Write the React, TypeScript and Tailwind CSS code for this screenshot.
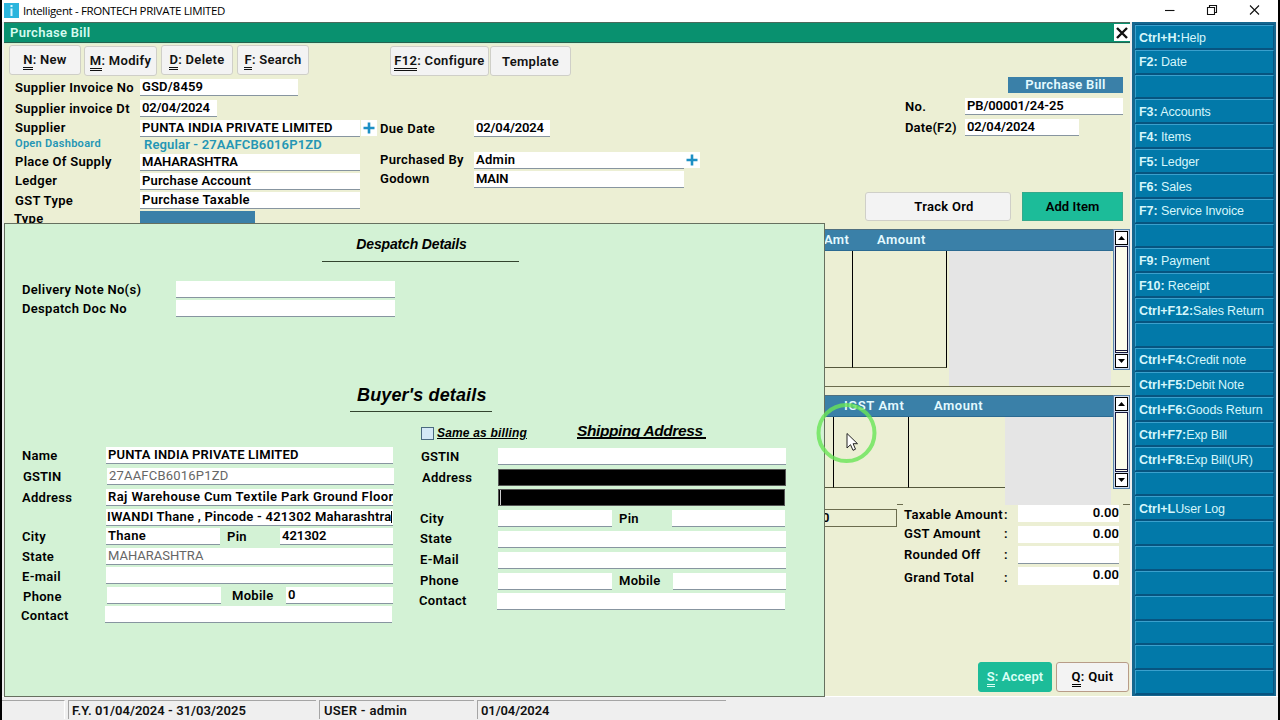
import type { ReactNode } from "react";

function Field({ className = "", children }: { className?: string; children?: ReactNode }) {
  return (
    <div className={`flex h-[17px] shrink-0 items-center overflow-hidden border-b border-[#8795a0] bg-white pb-px pl-[2px] leading-[15px] whitespace-pre ${className}`}>
      {children}
    </div>
  );
}

function Row({ label, labelClass, className, children }: { label: string; labelClass: string; className: string; children?: ReactNode }) {
  return (
    <div className={`flex h-[17px] ${className}`}>
      <div className={`shrink-0 leading-[16px] whitespace-pre ${labelClass}`}>{label}</div>
      {children}
    </div>
  );
}

function Plus({ className = "" }: { className?: string }) {
  return (
    <div className={`flex h-4 w-4 shrink-0 items-center justify-center bg-white ${className}`}>
      <svg width="12" height="12" viewBox="0 0 12 12">
        <path d="M6 0.5V11.5M0.5 6H11.5" stroke="#1c8fc4" strokeWidth="2.6" />
      </svg>
    </div>
  );
}

function ToolButton({ hot, text, className }: { hot?: string; text: string; className: string }) {
  return (
    <button className={`flex h-[30px] shrink-0 items-center justify-center rounded-[3px] border border-[#cfcfc8] bg-[#f3f3f3] leading-none whitespace-pre ${hot ? "pt-[3px]" : ""} ${className}`}>
      {hot && <span className="border-b-[3px] border-double border-current pb-px leading-[13px]">{hot}</span>}
      <span className={hot ? "pb-1" : ""}>{text}</span>
    </button>
  );
}

const shortcuts: [string, string][] = [
  ["Ctrl+H:", "Help"], ["F2:", " Date"], ["", ""], ["F3:", " Accounts"], ["F4:", " Items"],
  ["F5:", " Ledger"], ["F6:", " Sales"], ["F7:", " Service Invoice"], ["", ""], ["F9:", " Payment"],
  ["F10:", " Receipt"], ["Ctrl+F12:", "Sales Return"], ["", ""], ["Ctrl+F4:", "Credit note"],
  ["Ctrl+F5:", "Debit Note"], ["Ctrl+F6:", "Goods Return"], ["Ctrl+F7:", "Exp Bill"],
  ["Ctrl+F8:", "Exp Bill(UR)"], ["", ""], ["Ctrl+L", "User Log"], ["", ""], ["", ""], ["", ""],
  ["", ""], ["", ""], ["", ""], ["", ""],
];

function Sidebar() {
  return (
    <aside className="grid h-[674px] w-[144px] shrink-0 grid-rows-[repeat(27,minmax(0,1fr))] border-t-2 border-r-2 border-b border-l-[3px] border-[#15668f] bg-[#075480] pt-px font-['Liberation_Sans',sans-serif] text-[12.5px] font-normal text-[#d5f6fb]">
      {shortcuts.map(([key, name], i) => (
        <div key={i} className="mb-px flex items-center border border-t-[#3aa0cd] border-r-[#075480] border-b-[#075480] border-l-[#3aa0cd] bg-[#0279a9] pt-[2px] pl-[3px] leading-none whitespace-pre">
          <b className="tracking-[-0.05px]">{key}</b>
          <span className="tracking-[-0.12px]">{name}</span>
        </div>
      ))}
    </aside>
  );
}

function TitleBar() {
  return (
    <header className="flex h-[22px] items-center bg-white pl-[2px] font-['Open_Sans',sans-serif] text-[11.5px] font-normal tracking-[-0.37px] text-black">
      <div className="mb-[2px] flex h-[15px] w-[15px] items-center justify-center bg-[#2bb5dd] text-white">
        <svg width="5" height="11" viewBox="0 0 5 11">
          <path d="M2.5 0V2M2.5 3.5V11" stroke="#d9f6ff" strokeWidth="2" />
        </svg>
      </div>
      <span className="ml-[4px] leading-none">Intelligent - FRONTECH PRIVATE LIMITED</span>
      <svg className="mt-[-3px] mr-[18px] ml-auto" width="98" height="14" viewBox="0 0 98 14" fill="none" stroke="#111" strokeWidth="1.1">
        <path d="M3 7.5H12.5" />
        <path d="M45.5 4.5H52.5V11.5H45.5ZM47.5 4.5V2.5H54.5V9.5H52.5" />
        <path d="M88 2.5L97 11.5M97 2.5L88 11.5" />
      </svg>
    </header>
  );
}

function ScrollBar({ className }: { className: string }) {
  return (
    <div className={`flex w-[17px] shrink-0 flex-col items-center gap-px border border-[#5b86ad] bg-[#cfdcef] pt-px pb-px ${className}`}>
      <div className="flex h-[14px] w-[13px] shrink-0 items-center justify-center border border-black bg-white">
        <svg width="7" height="4" viewBox="0 0 7 4"><path d="M0 4L3.5 0L7 4Z" fill="#000" /></svg>
      </div>
      <div className="w-[13px] flex-1 border border-b-[3px] border-double border-[#15153a] bg-[#fdfdec]" />
      <div className="flex h-[14px] w-[13px] shrink-0 items-center justify-center border border-black bg-white">
        <svg width="7" height="4" viewBox="0 0 7 4"><path d="M0 0L3.5 4L7 0Z" fill="#000" /></svg>
      </div>
    </div>
  );
}

function BillForm() {
  return (
    <section className="flex h-[153px] text-black">
      <div className="w-[356px] shrink-0">
        <Row label="Supplier Invoice No" labelClass="w-[125px] pt-px" className="mt-[3px] ml-[11px]">
          <Field className="w-[158px] tracking-[0.15px]">GSD/8459</Field>
        </Row>
        <Row label="Supplier invoice Dt" labelClass="w-[125px] pt-px" className="mt-[4px] ml-[11px]">
          <Field className="w-[77px] tracking-[-0.15px]">02/04/2024</Field>
        </Row>
        <Row label="Supplier" labelClass="w-[125px]" className="mt-[3px] ml-[11px]">
          <Field className="w-[220px] tracking-[0.15px]">PUNTA INDIA PRIVATE LIMITED</Field>
        </Row>
        <div className="ml-[11px] flex h-[16px] whitespace-nowrap text-[#2496b5]">
          <div className="w-[129px] text-[11px] leading-[14px]">Open Dashboard</div>
          <div className="leading-[16px] tracking-[0.15px]">Regular - 27AAFCB6016P1ZD</div>
        </div>
        <Row label="Place Of Supply" labelClass="w-[125px]" className="mt-px ml-[11px]">
          <Field className="w-[220px] tracking-[-0.1px]">MAHARASHTRA</Field>
        </Row>
        <Row label="Ledger" labelClass="w-[125px]" className="mt-[2px] ml-[11px]">
          <Field className="w-[220px] tracking-[0.15px]">Purchase Account</Field>
        </Row>
        <Row label="GST Type" labelClass="w-[125px] pt-px" className="mt-[2px] ml-[11px]">
          <Field className="w-[220px]">Purchase Taxable</Field>
        </Row>
        <Row label="Type" labelClass="w-[126px]" className="mt-[2px] ml-[10px]">
          <div className="w-[115px] bg-[#3a80a8]" />
        </Row>
      </div>

      <div className="w-[500px] shrink-0 pt-[44px]">
        <div className="flex h-[17px]">
          <Plus className="mr-[3px] ml-px" />
          <div className="w-[94px] shrink-0 leading-[17px]">Due Date</div>
          <Field className="w-[76px] tracking-[-0.15px]">02/04/2024</Field>
        </div>
        <Row label="Purchased By" labelClass="w-[94px]" className="mt-[15px] ml-[20px]">
          <Field className="w-[210px]">Admin</Field>
          <Plus />
        </Row>
        <Row label="Godown" labelClass="w-[94px]" className="mt-[2px] ml-[20px]">
          <Field className="w-[210px] tracking-[-0.2px]">MAIN</Field>
        </Row>
      </div>

      <div className="w-[266px] shrink-0">
        <div className="mt-px ml-[148px] flex h-[16px] w-[115px] items-center justify-center bg-[#3a80a8] pb-px text-[#e4faff]">Purchase Bill</div>
        <Row label="No." labelClass="w-[60px] pt-px" className="mt-[5px] ml-[45px]">
          <Field className="w-[158px] tracking-[-0.1px]">PB/00001/24-25</Field>
        </Row>
        <Row label="Date(F2)" labelClass="w-[60px] pt-px tracking-[0.15px]" className="mt-[4px] ml-[45px]">
          <Field className="w-[114px] tracking-[-0.15px]">02/04/2024</Field>
        </Row>
        <div className="mt-[56px] ml-[5px] flex gap-[11px]">
          <button className="h-[29px] w-[146px] rounded-[3px] border border-[#cfcfc8] bg-[#f3f3f3] pl-3">Track Ord</button>
          <button className="h-[29px] w-[101px] border border-[#35a98c] bg-[#1cbc99] tracking-[0.1px]">Add Item</button>
        </div>
      </div>
    </section>
  );
}

function Grids() {
  return (
    <>
      <section className="flex h-[141px] w-[1126px]">
        <div className="flex flex-1 flex-col">
          <div className="flex h-[22px] shrink-0 items-center border-t border-b border-t-[#4f6f80] border-b-[#2b6a92] bg-[#3a80a8] pb-[2px] text-[#e4faff]">
            <span className="ml-[820px] w-[53px]">Amt</span>
            <span className="tracking-[0.45px]">Amount</span>
          </div>
          <div className="flex h-[135px] shrink-0">
            <div className="h-[117px] w-[849px] border-r border-b border-r-black border-b-[#55583c]" />
            <div className="h-[117px] w-[94px] border-r border-b border-r-black border-b-[#55583c]" />
            <div className="w-[2px]" />
            <div className="w-[162px] bg-[#e5e5e5]" />
          </div>
        </div>
        <ScrollBar className="h-[141px]" />
      </section>
      <div className="mt-[16px] h-px w-[1126px] bg-[#6b6c4e]" />
      <section className="mt-[8px] flex h-[94px] w-[1126px]">
        <div className="flex flex-1 flex-col">
          <div className="flex h-[22px] shrink-0 items-center border-t border-b border-t-[#4f6f80] border-b-[#2b6a92] bg-[#3a80a8] pb-[2px] text-[#e4faff]">
            <span className="ml-[840px] w-[90px] tracking-[0.6px]">IGST Amt</span>
            <span className="tracking-[0.5px]">Amount</span>
          </div>
          <div className="flex h-[88px] shrink-0">
            <div className="h-[71px] w-[830px] border-r border-b border-r-black border-b-[#55583c]" />
            <div className="h-[71px] w-[75px] border-r border-b border-r-black border-b-[#55583c]" />
            <div className="h-[71px] w-[96px] border-b border-[#55583c]" />
            <div className="w-[106px] bg-[#e5e5e5]" />
          </div>
        </div>
        <ScrollBar className="h-[94px]" />
      </section>
      <div className="mt-[15px] flex h-px w-[1126px] justify-end gap-[220px]">
        <div className="w-[6px] bg-[#6b6c4e]" />
        <div className="w-[7px] bg-[#6b6c4e]" />
      </div>
    </>
  );
}

const totals: [string, string, string, string][] = [
  ["Taxable Amount", "0.00", "mt-0 h-[17px]", "pt-[2px]"],
  ["GST Amount", "0.00", "mt-[4px] h-[17px]", "pt-0"],
  ["Rounded Off", "", "mt-[3px] h-[18px] ", "pt-px"],
  ["Grand Total", "0.00", "mt-[3px] h-[18px]", "pt-[3px]"],
];

function Totals() {
  return (
    <section className="flex">
      <div className="mt-[4px] h-[18px] w-[893px] border border-[#6b6c4e] pl-[817px] leading-[16px]">0</div>
      <div className="ml-[7px] w-[216px]">
        {totals.map(([name, value, box, pad]) => (
          <div key={name} className={`flex ${box}`}>
            <div className={`w-[100px] leading-[16px] whitespace-nowrap ${pad}`}>{name}</div>
            <div className={`w-[14px] leading-[16px] ${pad}`}>:</div>
            <div className={name === "Rounded Off" ? "w-[101px] border-b border-[#8795a0] bg-white" : "w-[101px] bg-white text-right leading-[16px] tracking-[0.1px]"}>{value}</div>
          </div>
        ))}
      </div>
    </section>
  );
}

function DespatchDialog() {
  return (
    <div className="absolute top-[200px] left-0 h-[474px] w-[821px] border border-[#66705f] bg-[#d3f2d5] text-black">
      <div className="ml-[317px] w-[197px] border-b border-[#33442f] pt-[13px] pb-[10px] text-center font-['Liberation_Sans',sans-serif] text-[14px] leading-[14px] font-bold tracking-[-0.15px] italic">
        <span className="mr-[18px]">Despatch Details</span>
      </div>
      <Row label="Delivery Note No(s)" labelClass="w-[154px] pt-px" className="mt-[19px] ml-[17px]"><Field className="w-[219px]" /></Row>
      <Row label="Despatch Doc No" labelClass="w-[154px] pt-px" className="mt-[2px] ml-[17px]"><Field className="w-[219px]" /></Row>
      <div className="mt-[66px] ml-[345px] h-[29px] w-[142px] border-b border-[#33442f] pl-[7px] font-['Liberation_Sans',sans-serif] text-[18px] leading-[24px] font-bold tracking-[0.15px] whitespace-nowrap italic">
        Buyer's details
      </div>
      <div className="mt-[8px] flex h-[22px] font-['Liberation_Sans',sans-serif] font-bold italic">
        <div className="mt-[7px] ml-[416px] h-[13px] w-[13px] border border-[#4a6a80] bg-[#d4e9f6]" />
        <div className="mt-[6px] ml-[3px] w-[140px] text-[12px] leading-[14px] tracking-[0.17px] underline">Same as billing</div>
        <div className="h-[19px] border-b-2 border-black pr-[3px] text-[15.5px] leading-[21px] tracking-[-0.4px] whitespace-nowrap">Shipping Address</div>
      </div>
      <div className="flex">
        <div className="w-[399px] pt-[5px]">
          <Row label="Name" labelClass="w-[84px] pt-px" className="ml-[17px]"><Field className="w-[287px] tracking-[0.15px]">PUNTA INDIA PRIVATE LIMITED</Field></Row>
          <Row label="GSTIN" labelClass="w-[84px] pt-px tracking-[0.1px]" className="mt-[4px] ml-[18px]"><Field className="w-[287px] font-normal tracking-[0.2px] text-[#666]">27AAFCB6016P1ZD</Field></Row>
          <Row label="Address" labelClass="w-[84px] pt-px" className="mt-[4px] ml-[17px]"><Field className="w-[287px] tracking-[0.4px]">Raj Warehouse Cum Textile Park Ground Floor,</Field></Row>
          <Row label="" labelClass="w-[84px]" className="mt-[3px] ml-[17px]">
            <Field className="w-[287px] pl-px tracking-[0.24px]">
              IWANDI Thane , Pincode - 421302 Maharashtra
              <div className="h-[12px] w-px bg-black" />
            </Field>
          </Row>
          <Row label="City" labelClass="w-[84px] pt-px" className="mt-[2px] ml-[17px]">
            <Field className="w-[114px]">Thane</Field>
            <div className="w-[60px] pl-[7px] leading-[17px]">Pin</div>
            <Field className="w-[113px] tracking-[-0.05px]">421302</Field>
          </Row>
          <Row label="State" labelClass="w-[84px] pt-px" className="mt-[3px] ml-[17px]"><Field className="w-[287px] font-normal tracking-[0px] text-[#666]">MAHARASHTRA</Field></Row>
          <Row label="E-mail" labelClass="w-[84px] pt-[2px]" className="mt-[2px] ml-[17px]"><Field className="w-[287px]" /></Row>
          <Row label="Phone" labelClass="w-[84px] pt-[2px]" className="mt-[3px] ml-[18px]">
            <Field className="w-[114px]" />
            <div className="w-[65px] pl-[11px] leading-[17px]">Mobile</div>
            <Field className="w-[107px]">0</Field>
          </Row>
          <Row label="Contact" labelClass="w-[84px] pt-[2px]" className="mt-[2px] ml-[16px]"><Field className="w-[287px]" /></Row>
        </div>
        <div className="pt-[6px]">
          <Row label="GSTIN" labelClass="w-[77px] pt-px tracking-[0.1px]" className="ml-[17px]"><Field className="w-[288px]" /></Row>
          <Row label="Address" labelClass="w-[76px] pt-px" className="mt-[4px] ml-[18px]"><div className="w-[288px] border border-[#555] bg-black" /></Row>
          <Row label="" labelClass="w-[77px]" className="mt-[3px] ml-[17px]"><div className="w-[287px] border border-[#555] bg-black"><div className="ml-px h-full w-px bg-[#ccc]" /></div></Row>
          <Row label="City" labelClass="w-[78px] pt-px" className="mt-[4px] ml-[16px]">
            <Field className="w-[114px]" />
            <div className="w-[60px] pl-[7px] leading-[17px]">Pin</div>
            <Field className="w-[113px]" />
          </Row>
          <Row label="State" labelClass="w-[78px]" className="mt-[4px] ml-[16px]"><Field className="w-[288px]" /></Row>
          <Row label="E-Mail" labelClass="w-[78px]" className="mt-[4px] ml-[16px]"><Field className="w-[288px]" /></Row>
          <Row label="Phone" labelClass="w-[78px]" className="mt-[4px] ml-[16px]">
            <Field className="w-[114px]" />
            <div className="w-[61px] pl-[7px] leading-[16px]">Mobile</div>
            <Field className="w-[113px]" />
          </Row>
          <Row label="Contact" labelClass="w-[78px]" className="mt-[3px] ml-[15px]"><Field className="w-[288px]" /></Row>
        </div>
      </div>
    </div>
  );
}

function StatusBar() {
  return (
    <footer className="flex h-[24px] w-full gap-[3px] border-t border-white bg-[#efefef] pt-[3px] text-[#111]">
      <div className="h-[19px] w-[63px] border-t border-r border-[#a5a5a5] border-r-white" />
      <div className="h-[19px] w-[248px] border-t border-l border-[#a5a5a5] pl-[3px] leading-[19px] tracking-[0.05px]">F.Y. 01/04/2024 - 31/03/2025</div>
      <div className="h-[19px] w-[155px] border-t border-l border-[#a5a5a5] pl-[4px] leading-[19px]">USER - admin</div>
      <div className="h-[19px] w-[249px] border-t border-l border-[#a5a5a5] pl-[3px] leading-[19px] tracking-[-0.1px]">01/04/2024</div>
    </footer>
  );
}

export default function App() {
  return (
    <div className="relative h-[720px] w-[1280px] overflow-hidden border-x-2 border-black bg-[#efefef] font-['Roboto',sans-serif] text-[13px] leading-none font-semibold tracking-[0.3px]">
      <TitleBar />
      <div className="flex h-[674px] justify-between pr-[2px] pl-[2px]">
        <main className="relative h-[674px] w-[1126px] border-t border-[#4c6a5c] bg-[#ecefd4]">
          <div className="flex h-[20px] items-center justify-between border-b border-[#28614f] bg-[#09916f] pl-[6px] text-[#d6fbef]">
            <span>Purchase Bill</span>
            <span className="flex h-[17px] w-[16px] items-center justify-center bg-white">
              <svg width="12" height="12" viewBox="0 0 12 12"><path d="M1 1L11 11M11 1L1 11" stroke="#111" strokeWidth="2.4" /></svg>
            </span>
          </div>
          <div className="flex h-[33px] border-t border-[#d3f2d5] pt-[1px] pl-[5px] text-[#111]">
            <ToolButton hot="N" text=": New" className="w-[72px]" />
            <ToolButton hot="M" text=": Modify" className="mt-px ml-[3px] w-[73px]" />
            <ToolButton hot="D" text=": Delete" className="ml-[4px] w-[72px]" />
            <ToolButton hot="F" text=": Search" className="ml-[4px] w-[72px]" />
            <ToolButton hot="F12" text=": Configure" className="mt-px ml-[81px] w-[99px]" />
            <ToolButton text="Template" className="mt-px ml-px w-[81px]" />
          </div>
          <BillForm />
          <Grids />
          <Totals />
          <div className="mt-[77px] ml-[974px] flex gap-[4px]">
            <ToolButton hot="S" text=": Accept" className="w-[74px] border-[#1cbc99]! bg-[#1cbc99]! tracking-[0.1px] text-[#d9fff5]" />
            <ToolButton hot="Q" text=": Quit" className="w-[73px] border-[#b89c88]!" />
          </div>
          <DespatchDialog />
        </main>
        <Sidebar />
      </div>
      <StatusBar />
      <svg className="absolute top-[402px] left-[813px]" width="62" height="62" viewBox="0 0 62 62">
        <circle cx="31.5" cy="31" r="28" fill="none" stroke="#69e556" strokeOpacity="0.8" strokeWidth="4" />
        <path d="M32 31.5V46L35.5 42.7L38 48.3L40.5 47.2L38.1 41.7H42.5Z" fill="#fff" stroke="#222" strokeWidth="1" />
      </svg>
    </div>
  );
}
